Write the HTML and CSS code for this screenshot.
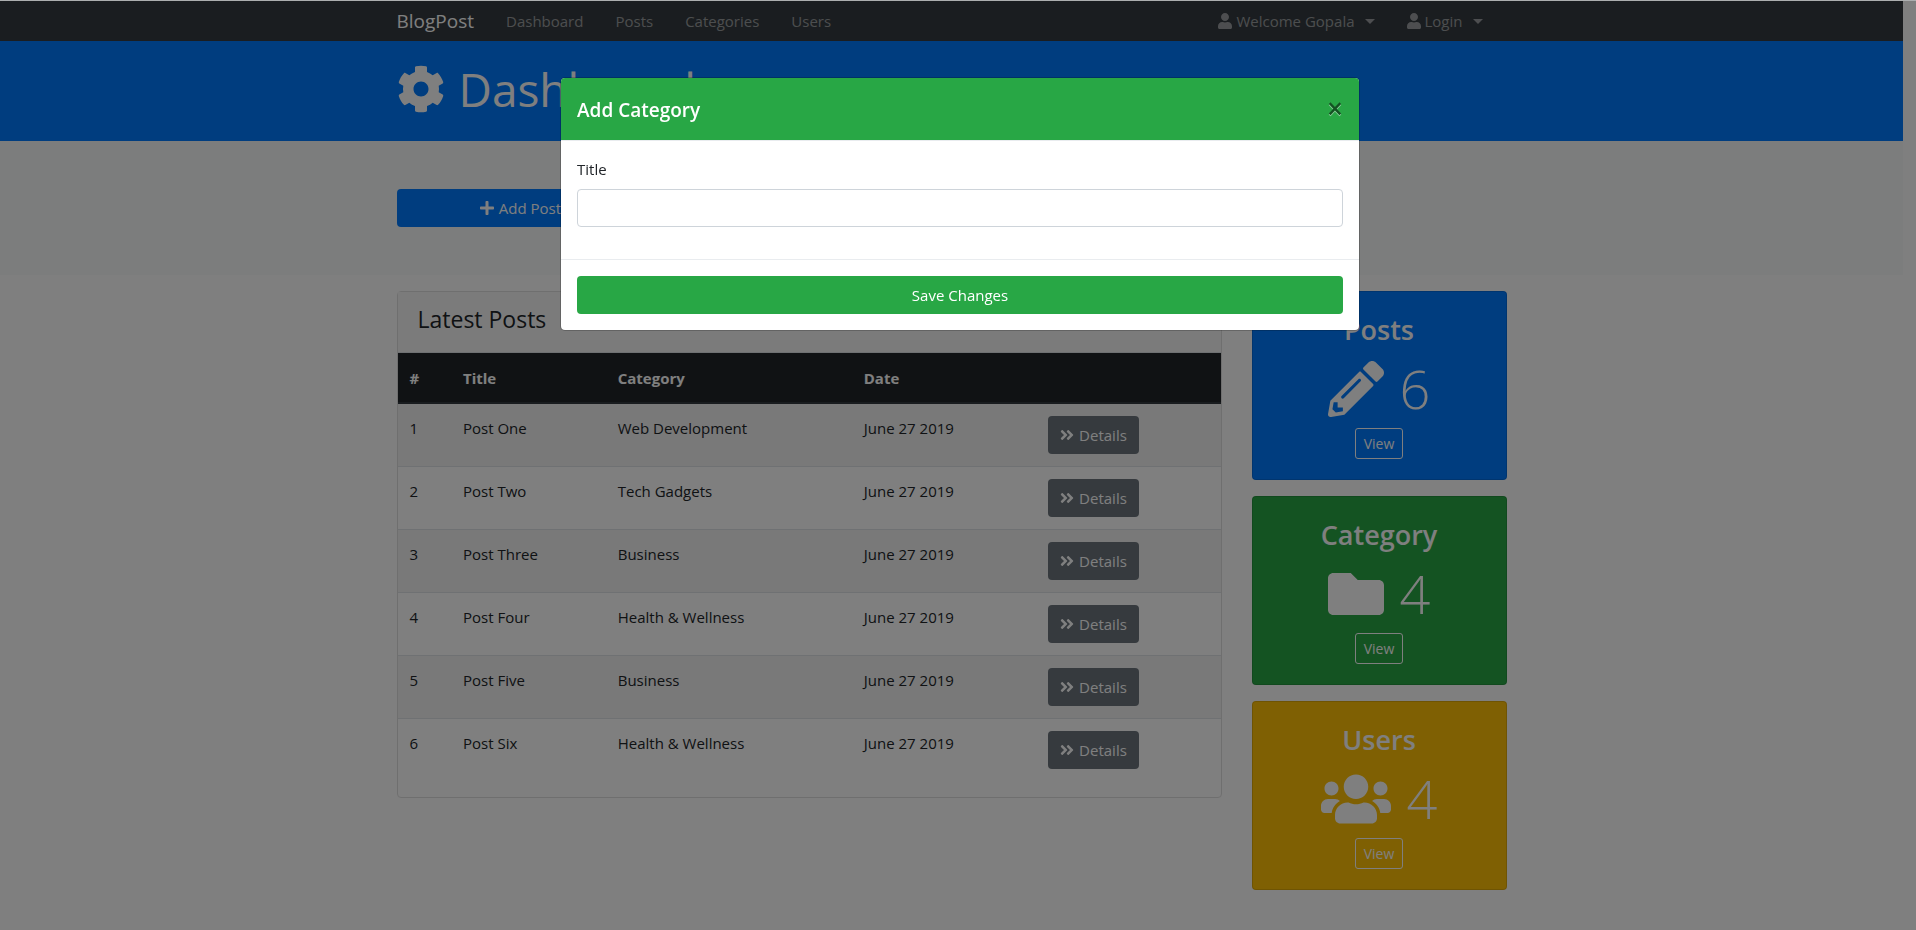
FILE: index.html
```html
<!DOCTYPE html>
<html lang="en">
<head>
<meta charset="utf-8">
<title>BlogPost</title>
<link rel="stylesheet" href="styles.css">
</head>
<body>
<svg class="sprite" aria-hidden="true">
  <symbol id="i-user" viewBox="0 0 448 512"><path d="M224 256c70.7 0 128-57.3 128-128S294.7 0 224 0 96 57.3 96 128s57.3 128 128 128zm89.6 32h-16.7c-22.2 10.2-46.9 16-72.9 16s-50.6-5.8-72.9-16h-16.7C60.2 288 0 348.2 0 422.4V464c0 26.5 21.5 48 48 48h352c26.5 0 48-21.5 48-48v-41.6c0-74.2-60.2-134.4-134.4-134.4z"/></symbol>
  <symbol id="i-cog" viewBox="0 0 512 512"><path d="M487.4 315.7l-42.6-24.6c4.3-23.2 4.3-47 0-70.2l42.6-24.6c4.9-2.8 7.1-8.6 5.5-14-11.1-35.6-30-67.8-54.7-94.6-3.8-4.1-10-5.1-14.8-2.3L380.8 110c-17.9-15.4-38.5-27.3-60.8-35.1V25.8c0-5.6-3.9-10.5-9.4-11.7-36.7-8.2-74.3-7.8-109.2 0-5.5 1.2-9.4 6.1-9.4 11.7V75c-22.2 7.9-42.8 19.8-60.8 35.1L88.7 85.5c-4.9-2.8-11-1.9-14.8 2.3-24.7 26.7-43.6 58.9-54.7 94.6-1.7 5.4.6 11.2 5.5 14L67.3 221c-4.3 23.2-4.3 47 0 70.2l-42.6 24.6c-4.9 2.8-7.1 8.6-5.5 14 11.1 35.6 30 67.8 54.7 94.6 3.8 4.1 10 5.1 14.8 2.3l42.6-24.6c17.9 15.4 38.5 27.3 60.8 35.1v49.2c0 5.6 3.9 10.5 9.4 11.7 36.7 8.2 74.3 7.8 109.2 0 5.5-1.2 9.4-6.1 9.4-11.7v-49.2c22.2-7.9 42.8-19.8 60.8-35.1l42.6 24.6c4.9 2.8 11 1.9 14.8-2.3 24.7-26.7 43.6-58.9 54.7-94.6 1.5-5.5-.7-11.3-5.6-14.1zM256 336c-44.1 0-80-35.9-80-80s35.9-80 80-80 80 35.9 80 80-35.9 80-80 80z"/></symbol>
  <symbol id="i-plus" viewBox="0 0 448 512"><path d="M416 208H272V64c0-17.67-14.33-32-32-32h-32c-17.67 0-32 14.33-32 32v144H32c-17.67 0-32 14.33-32 32v32c0 17.67 14.33 32 32 32h144v144c0 17.67 14.33 32 32 32h32c17.67 0 32-14.33 32-32V304h144c17.67 0 32-14.33 32-32v-32c0-17.67-14.33-32-32-32z"/></symbol>
  <symbol id="i-angles" viewBox="0 0 448 512"><path d="M224.3 273l-136 136c-9.4 9.4-24.6 9.4-33.9 0l-22.6-22.6c-9.4-9.4-9.4-24.6 0-33.9l96.4-96.4-96.4-96.4c-9.4-9.4-9.4-24.6 0-33.9L54.3 103c9.4-9.4 24.6-9.4 33.9 0l136 136c9.5 9.4 9.5 24.6.1 34zm192-34l-136-136c-9.4-9.4-24.6-9.4-33.9 0l-22.6 22.6c-9.4 9.4-9.4 24.6 0 33.9l96.4 96.4-96.4 96.4c-9.4 9.4-9.4 24.6 0 33.9l22.6 22.6c9.4 9.4 24.6 9.4 33.9 0l136-136c9.4-9.2 9.4-24.4 0-33.8z"/></symbol>
  <symbol id="i-pencil" viewBox="0 0 512 512"><path d="M497.9 142.1l-46.1 46.1c-4.7 4.7-12.3 4.7-17 0l-111-111c-4.7-4.7-4.7-12.3 0-17l46.1-46.1c18.7-18.7 49.1-18.7 67.9 0l60.1 60.1c18.8 18.7 18.8 49.1 0 67.9zM284.2 99.8L21.6 362.4.4 483.9c-2.9 16.4 11.4 30.6 27.8 27.8l121.5-21.3 262.6-262.6c4.7-4.7 4.7-12.3 0-17l-111-111c-4.8-4.7-12.4-4.7-17.1 0zM124.1 339.9c-5.5-5.5-5.5-14.3 0-19.8l154-154c5.5-5.5 14.3-5.5 19.8 0s5.5 14.3 0 19.8l-154 154c-5.5 5.5-14.3 5.5-19.8 0zM88 424h48v36.3l-64.5 11.3-31.1-31.1L51.7 376H88v48z"/></symbol>
  <symbol id="i-folder" viewBox="0 0 512 512"><path d="M464 128H272l-64-64H48C21.49 64 0 85.49 0 112v288c0 26.51 21.49 48 48 48h416c26.51 0 48-21.49 48-48V176c0-26.51-21.49-48-48-48z"/></symbol>
  <symbol id="i-users" viewBox="0 0 640 512"><path d="M96 224c35.3 0 64-28.7 64-64s-28.7-64-64-64-64 28.7-64 64 28.7 64 64 64zm448 0c35.3 0 64-28.7 64-64s-28.7-64-64-64-64 28.7-64 64 28.7 64 64 64zm32 32h-64c-17.6 0-33.5 7.1-45.1 18.6 40.3 22.1 68.9 62 75.1 109.4h66c17.7 0 32-14.3 32-32v-32c0-35.3-28.7-64-64-64zm-256 0c61.9 0 112-50.1 112-112S381.9 32 320 32 208 82.1 208 144s50.1 112 112 112zm76.8 32h-8.3c-20.8 10-43.9 16-68.5 16s-47.6-6-68.5-16h-8.3C179.6 288 128 339.6 128 403.2V432c0 26.5 21.5 48 48 48h288c26.5 0 48-21.5 48-48v-28.8c0-63.6-51.6-115.2-115.2-115.2zm-223.7-13.4C161.5 263.1 145.6 256 128 256H64c-35.3 0-64 28.7-64 64v32c0 17.7 14.3 32 32 32h65.9c6.3-47.4 34.9-87.3 75.2-109.4z"/></symbol>
</svg>

<nav class="navbar">
  <div class="container navbar-inner">
    <a class="brand" href="#">BlogPost</a>
    <ul class="nav">
      <li><a href="#">Dashboard</a></li>
      <li><a href="#">Posts</a></li>
      <li><a href="#">Categories</a></li>
      <li><a href="#">Users</a></li>
    </ul>
    <ul class="nav nav-right">
      <li><a class="toggle" href="#"><svg class="icon"><use href="#i-user"/></svg>Welcome Gopala</a></li>
      <li><a class="toggle" href="#"><svg class="icon"><use href="#i-user"/></svg>Login</a></li>
    </ul>
  </div>
</nav>

<header class="page-header">
  <div class="container">
    <h1><svg class="icon-cog"><use href="#i-cog"/></svg>Dashboard</h1>
  </div>
</header>

<section class="actions">
  <div class="container actions-row">
    <button class="btn btn-primary" type="button"><svg class="icon"><use href="#i-plus"/></svg>Add Posts</button>
  </div>
</section>

<main class="container content">
  <section class="card">
    <div class="card-header"><h2>Latest Posts</h2></div>
    <table>
      <colgroup><col class="c-num"><col class="c-title"><col class="c-category"><col class="c-date"><col></colgroup>
      <thead>
        <tr><th>#</th><th>Title</th><th>Category</th><th>Date</th><th></th></tr>
      </thead>
      <tbody>
        <tr><td>1</td><td>Post One</td><td>Web Development</td><td>June 27 2019</td><td><a class="btn btn-secondary" href="#"><svg class="icon"><use href="#i-angles"/></svg>Details</a></td></tr>
        <tr><td>2</td><td>Post Two</td><td>Tech Gadgets</td><td>June 27 2019</td><td><a class="btn btn-secondary" href="#"><svg class="icon"><use href="#i-angles"/></svg>Details</a></td></tr>
        <tr><td>3</td><td>Post Three</td><td>Business</td><td>June 27 2019</td><td><a class="btn btn-secondary" href="#"><svg class="icon"><use href="#i-angles"/></svg>Details</a></td></tr>
        <tr><td>4</td><td>Post Four</td><td>Health &amp; Wellness</td><td>June 27 2019</td><td><a class="btn btn-secondary" href="#"><svg class="icon"><use href="#i-angles"/></svg>Details</a></td></tr>
        <tr><td>5</td><td>Post Five</td><td>Business</td><td>June 27 2019</td><td><a class="btn btn-secondary" href="#"><svg class="icon"><use href="#i-angles"/></svg>Details</a></td></tr>
        <tr><td>6</td><td>Post Six</td><td>Health &amp; Wellness</td><td>June 27 2019</td><td><a class="btn btn-secondary" href="#"><svg class="icon"><use href="#i-angles"/></svg>Details</a></td></tr>
      </tbody>
    </table>
  </section>

  <aside class="stats">
    <section class="stat stat-blue">
      <h3>Posts</h3>
      <p class="count"><svg class="icon-stat"><use href="#i-pencil"/></svg>6</p>
      <a class="btn-view" href="#">View</a>
    </section>
    <section class="stat stat-green">
      <h3>Category</h3>
      <p class="count"><svg class="icon-stat"><use href="#i-folder"/></svg>4</p>
      <a class="btn-view" href="#">View</a>
    </section>
    <section class="stat stat-yellow">
      <h3>Users</h3>
      <p class="count"><svg class="icon-stat icon-wide"><use href="#i-users"/></svg>4</p>
      <a class="btn-view" href="#">View</a>
    </section>
  </aside>
</main>

<div class="modal-layer">
  <form class="modal" role="dialog" aria-modal="true" aria-labelledby="modal-title">
    <div class="modal-header">
      <h2 id="modal-title">Add Category</h2>
      <button class="close" type="button" aria-label="Close">×</button>
    </div>
    <div class="modal-body">
      <label for="title">Title</label>
      <input id="title" type="text">
    </div>
    <div class="modal-footer">
      <button class="btn btn-success" type="button">Save Changes</button>
    </div>
  </form>
</div>
</body>
</html>
```
FILE: styles.css
```css
* { box-sizing: border-box; }

body {
  margin: 0;
  padding-right: 13px;
  border-top: 1px solid #acaeaf;
  overflow: hidden;
  background: #fff;
  color: #212529;
  font: 400 15px/24px "Segoe UI", "Open Sans", "Noto Sans", sans-serif;
}

h1, h2, h3, p, ul { margin: 0; padding: 0; }
a { color: inherit; text-decoration: none; }
svg { fill: currentColor; }
.sprite { position: absolute; width: 0; height: 0; }

.container {
  width: 100%;
  max-width: 1140px;
  margin: 0 auto;
  padding: 0 15px;
}

.icon {
  flex: none;
  width: 14px;
  height: 16px;
}

/* Navigation */
.navbar { background: #343a40; }
.navbar-inner {
  display: flex;
  align-items: center;
  height: 40px;
}
.brand {
  margin-right: 32px;
  color: #fff;
  font-size: 19px;
  line-height: 30px;
}
.nav {
  display: flex;
  gap: 32px;
  list-style: none;
  color: rgba(255, 255, 255, .5);
}
.nav-right {
  margin-left: auto;
  padding-right: 24px;
}
.nav a {
  display: flex;
  align-items: center;
  gap: 4px;
}
.toggle::after {
  content: "";
  margin-left: 6px;
  border: 5px solid transparent;
  border-top-color: currentColor;
  border-bottom: 0;
}

/* Page heading */
.page-header {
  padding: 16px 0;
  background: #007bff;
  color: #fff;
}
h1 {
  display: flex;
  align-items: center;
  gap: 14px;
  height: 68px;
  padding-bottom: 4px;
  font-size: 46px;
  font-weight: 400;
  line-height: 58px;
}
.icon-cog {
  width: 48px;
  height: 48px;
}

/* Buttons */
.btn {
  display: inline-flex;
  align-items: center;
  justify-content: center;
  gap: 5px;
  height: 38px;
  padding: 0 12px;
  border: 0;
  border-radius: 4px;
  color: #fff;
  font: inherit;
}
.btn-primary { background: #007bff; }
.btn-secondary { background: #6c757d; }
.btn-success {
  width: 100%;
  background: #28a745;
}

.actions {
  padding: 48px 0;
  margin-bottom: 16px;
  background: #f8fbfa;
}
.actions-row {
  display: grid;
  grid-template-columns: repeat(4, 1fr);
  gap: 30px;
}

/* Posts and counters */
.content {
  display: grid;
  grid-template-columns: 825fr 255fr;
  gap: 30px;
  align-items: start;
}
.card {
  padding-bottom: 16px;
  border: 1px solid #dfdfdf;
  border-radius: 4px;
}
.card-header {
  padding: 13px 20px 18px;
  background: #f7f7f7;
}
.card-header h2 {
  font-size: 23px;
  font-weight: 500;
  line-height: 29px;
}

table {
  width: 100%;
  table-layout: fixed;
  border-collapse: separate;
  border-spacing: 0;
}
.c-num { width: 6.5%; }
.c-title { width: 18.8%; }
.c-category { width: 29.9%; }
.c-date { width: 22.4%; }
th, td {
  padding: 12px;
  text-align: left;
  vertical-align: top;
}
th {
  border-top: 1px solid #dee2e6;
  border-bottom: 2px solid #32383e;
  padding-top: 13px;
  background: #212529;
  color: #fff;
  font-weight: 700;
}
td { border-top: 1px solid #dee2e6; }
tbody tr:first-child td { border-top: 0; }
tbody tr:nth-child(odd) { background: #f2f2f2; }
td .btn { vertical-align: top; }

.stats {
  display: flex;
  flex-direction: column;
  gap: 16px;
}
.stat {
  display: flex;
  flex-direction: column;
  align-items: center;
  padding: 21px 20px 20px;
  border: 1px solid rgba(0, 0, 0, .125);
  border-radius: 4px;
  color: #fff;
}
.stat-blue { background: #007bff; }
.stat-green { background: #28a745; }
.stat-yellow { background: #ffc107; }
.stat h3 {
  margin-bottom: 8px;
  font-size: 27px;
  font-weight: 600;
  line-height: 34px;
}
.count {
  display: flex;
  align-items: center;
  gap: 16px;
  height: 67px;
  margin-bottom: 6px;
  font-size: 54px;
  font-weight: 300;
  line-height: 67px;
}
.icon-stat {
  width: 56px;
  height: 56px;
}
.icon-wide { width: 70px; }
.btn-view {
  padding: 4px 8px;
  border: 1px solid #fff;
  border-radius: 3px;
  font-size: 14px;
  line-height: 21px;
}

/* Dialog over the dimmed page */
.modal-layer {
  position: fixed;
  inset: 1px 0 0;
  padding: 76px 0 0 4px;
  background: rgba(0, 0, 0, .5);
}
.modal {
  max-width: 800px;
  margin: 0 auto;
  border: 1px solid rgba(0, 0, 0, .2);
  border-radius: 5px;
  background: #fff;
  background-clip: padding-box;
}
.modal-header {
  display: flex;
  align-items: center;
  justify-content: space-between;
  padding: 17px 16px 15px;
  border-bottom: 1px solid #e9ecef;
  border-radius: 4px 4px 0 0;
  background: #28a745;
  background-clip: padding-box;
  color: #fff;
}
.modal-header h2 {
  font-size: 19px;
  font-weight: 600;
  line-height: 30px;
}
.close {
  padding: 0 0 4px;
  border: 0;
  background: none;
  color: #000;
  font: 600 28px/24px "Segoe UI", "Open Sans", sans-serif;
  text-shadow: 0 1px 0 #fff;
  opacity: .5;
}
.modal-body { padding: 16px 16px 32px; }
.modal-body label {
  display: block;
  margin-bottom: 8px;
}
.modal-body input {
  display: block;
  width: 100%;
  height: 38px;
  padding: 6px 12px;
  border: 1px solid #ced4da;
  border-radius: 4px;
  font: inherit;
}
.modal-footer {
  padding: 16px;
  border-top: 1px solid #e9ecef;
}
```
